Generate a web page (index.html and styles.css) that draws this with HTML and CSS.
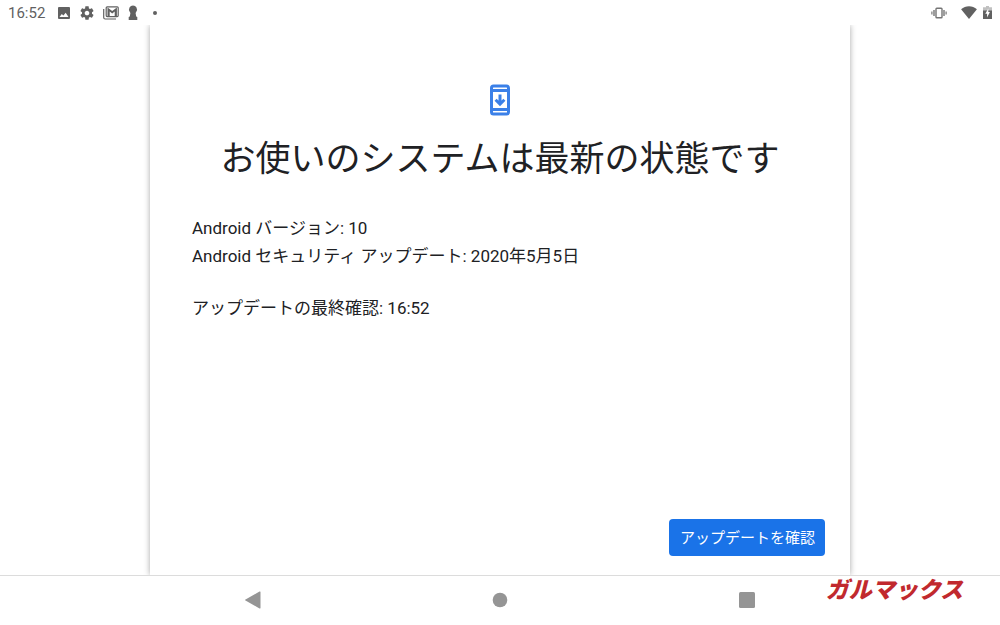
FILE: index.html
```html
<!DOCTYPE html>
<html lang="ja">

<head>
    <meta charset="UTF-8">
    <meta name="viewport" content="width=device-width, initial-scale=1.0">
    <title>システム アップデート</title>
    <link rel="stylesheet" href="styles.css">
</head>

<body>
    <header class="status-bar">
        <div class="status-left">
            <span class="clock">16:52</span>
            <svg class="image-icon" width="14" height="14" viewBox="0 0 14 14">
                <path fill-rule="evenodd" d="M2 1h10a1 1 0 0 1 1 1v10a1 1 0 0 1-1 1H2a1 1 0 0 1-1-1V2a1 1 0 0 1 1-1zM2.500 11h9L8.700 6.800 6.400 9.600 4.800 7.900z" />
            </svg>
            <svg class="gear-icon" width="16" height="16" viewBox="0 0 24 24">
                <path d="M19.430 12.980c.04-.32.07-.64.07-.98s-.03-.66-.07-.98l2.110-1.650c.19-.15.24-.42.12-.64l-2-3.460c-.12-.22-.39-.3-.61-.22l-2.490 1c-.52-.4-1.080-.73-1.690-.98l-.38-2.650C14.460 2.180 14.250 2 14 2h-4c-.25 0-.46.18-.49.42l-.38 2.650c-.61.25-1.170.59-1.690.98l-2.490-1c-.23-.09-.49 0-.61.22l-2 3.460c-.13.22-.07.49.12.64l2.110 1.650c-.04.32-.07.65-.07.98s.03.66.07.98l-2.110 1.650c-.19.15-.24.42-.12.64l2 3.460c.12.22.39.3.61.22l2.490-1c.52.4 1.080.73 1.690.98l.38 2.650c.03.24.24.42.49.42h4c.25 0 .46-.18.49-.42l.38-2.650c.61-.25 1.170-.59 1.690-.98l2.490 1c.23.09.49 0 .61-.22l2-3.460c.12-.22.07-.49-.12-.64l-2.110-1.650zM12 15.500c-1.930 0-3.500-1.570-3.500-3.500s1.570-3.500 3.500-3.500 3.500 1.570 3.500 3.500-1.570 3.500-3.500 3.500z" />
            </svg>
            <svg class="mail-icon" width="16" height="14" viewBox="0 0 16 14">
                <path d="M.7 3v8.500a1.500 1.500 0 0 0 1.500 1.500H13" fill="none" stroke="currentColor" stroke-width="1.200" />
                <rect x="3.200" y=".8" width="12" height="9.800" rx="1" fill="none" stroke="currentColor" stroke-width="1.200" />
                <path d="M4.500 10.500V1.500l4.700 3.600 4.700-3.600v9h-2.200V5.400L9.200 7.500 6.700 5.400v5.100z" />
            </svg>
            <svg class="keyhole-icon" width="12" height="16" viewBox="0 0 10 16">
                <path d="M5 .5a4 4 0 0 1 3.300 6.200L7.600 8l.6 3.500L9.300 12v3H.7v-3l1.100-.5L2.400 8l-.7-1.300A4 4 0 0 1 5 .5z" />
            </svg>
            <span class="dot"></span>
        </div>
        <div class="status-right">
            <svg class="vibrate-icon" width="16" height="12" viewBox="0 0 16 12">
                <rect x="5" y="1.200" width="6" height="9.600" rx=".8" fill="none" stroke="currentColor" stroke-width="1.400" />
                <path d="M.3 4.500h1.200v3H.3zM2.300 3h1.400v6H2.300zM12.300 3h1.400v6h-1.400zM14.500 4.500h1.200v3h-1.200z" />
            </svg>
            <svg class="wifi-icon" width="16" height="13" viewBox="0 0 16 13">
                <path d="M8 13L.1 3.300C2.400 1.300 5 .3 8 .3s5.600 1 7.900 3z" />
            </svg>
            <svg class="battery-icon" width="9" height="13" viewBox="0 0 9 13">
                <path d="M3 0h3v1.300h3V5H0V1.300h3z" opacity=".4" />
                <path d="M0 4.500h9V13H0z" />
                <path d="M5.300 2.500L2.300 7.800h1.800v3.700l2.800-5.400H5.300z" fill="#fff" />
            </svg>
        </div>
    </header>

    <main class="card">
        <svg class="update-icon" width="20" height="32" viewBox="0 0 20 32">
            <rect x="1.500" y="2" width="17" height="28" rx="2" />
            <path d="M1.500 6.500h17M1.500 25.500h17M10 10.500v9.500M5.600 15.800l4.400 4.400 4.400-4.400" />
        </svg>
        <h1>お使いのシステムは最新の状態です</h1>
        <div class="details">
            <p>Android バージョン: 10<br>Android セキュリティ アップデート: 2020年5月5日</p>
            <p>アップデートの最終確認: 16:52</p>
        </div>
        <button class="check-button" type="button">アップデートを確認</button>
    </main>

    <nav class="nav-bar">
        <button type="button" aria-label="戻る">
            <svg width="18" height="18" viewBox="0 0 18 18">
                <path d="M16.500 1v16a.6.6 0 0 1-1 .4L1.500 9.600a.7.7 0 0 1 0-1.200L15.500.6a.6.6 0 0 1 1 .4z" />
            </svg>
        </button>
        <button type="button" aria-label="ホーム">
            <svg width="16" height="16" viewBox="0 0 16 16">
                <circle cx="8" cy="8" r="7.300" />
            </svg>
        </button>
        <button type="button" aria-label="最近使ったアプリ">
            <svg width="16" height="16" viewBox="0 0 16 16">
                <rect width="16" height="16" rx="1.500" />
            </svg>
        </button>
        <span class="watermark">ガルマックス</span>
    </nav>
</body>

</html>
```
FILE: styles.css
```css
* {
    box-sizing: border-box;
}

body {
    font-family: Roboto, "Noto Sans CJK JP", sans-serif;
    background-color: #fff;
    color: #202124;
    display: flex;
    flex-direction: column;
    min-height: 100vh;
    margin: 0;
}

svg {
    display: block;
    fill: currentColor;
}

.status-bar {
    display: flex;
    justify-content: space-between;
    align-items: center;
    height: 25px;
    padding: 0 8px;
    background: #fff;
    color: #616161;
}

.status-left,
.status-right {
    display: flex;
    align-items: center;
}

.status-left {
    gap: 8px;
}

.status-right {
    gap: 6px;
}

.clock {
    font-size: 15px;
    line-height: 24px;
    margin-right: 4px;
}

.dot {
    width: 4px;
    height: 4px;
    margin-left: 6px;
    border-radius: 50%;
    background: #616161;
}

.vibrate-icon {
    margin-right: 8px;
    color: #757575;
}

.card {
    flex: 1;
    display: flex;
    flex-direction: column;
    align-items: center;
    width: 70%;
    margin: 0 auto;
    padding: 59px 25px 19px;
    box-shadow: 0 0 6px rgba(0, 0, 0, 0.35);
    clip-path: inset(0 -8px);
}

.update-icon {
    fill: none;
    stroke: #3b80e8;
    stroke-width: 3;
}

h1 {
    margin: 18px 0 0;
    font-size: 35px;
    font-weight: 400;
    line-height: 52px;
}

.details {
    align-self: stretch;
    padding: 28px 17px;
    font-size: 17px;
    line-height: 28px;
}

.details p {
    margin: 0 0 24px;
}

.check-button {
    align-self: flex-end;
    margin-top: auto;
    height: 37px;
    padding: 0 10px 2px 11px;
    border: none;
    border-radius: 4px;
    background-color: #1a73e8;
    color: #fff;
    font-family: inherit;
    font-size: 15px;
    cursor: pointer;
}

.nav-bar {
    display: grid;
    grid-template-columns: repeat(3, 1fr);
    height: 50px;
    padding: 0 13% 2px;
    border-top: 1px solid #dcdcdc;
    background: #fff;
    color: #959595;
    position: relative;
}

.nav-bar button {
    display: flex;
    justify-content: center;
    align-items: center;
    padding: 0;
    border: none;
    background: none;
    color: inherit;
    cursor: pointer;
}

.watermark {
    position: absolute;
    top: 1px;
    right: 37px;
    color: #c1292e;
    font-size: 23px;
    font-style: italic;
    font-weight: 900;
    line-height: 28px;
}
```
